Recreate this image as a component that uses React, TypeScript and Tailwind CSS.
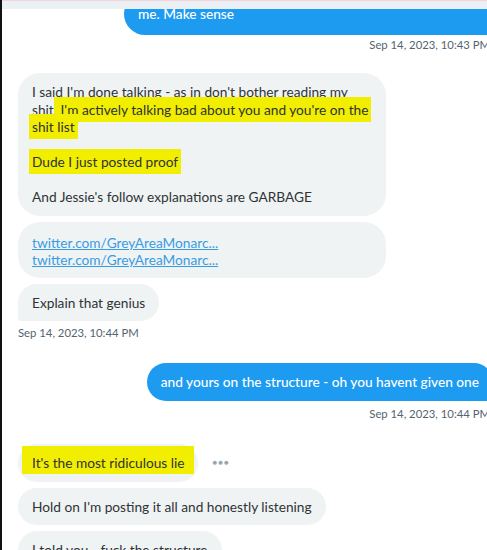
import React from 'react';

const font = { fontFamily: 'Lato, "Noto Sans", Arial, sans-serif' };

function Hl({ children, big }: { children: React.ReactNode; big?: boolean }) {
  return (
    <span
      className={
        big
          ? 'bg-[#f2ee00] pt-[8px] pb-[3px] pl-[10px] pr-[10px] -ml-[10px] -mr-[10px]'
          : 'bg-[#f2ee00] py-[4px] px-[3px] -mx-[3px] [box-decoration-break:clone]'
      }
    >
      {children}
    </span>
  );
}

function Stamp({ right, children }: { right?: boolean; children: React.ReactNode }) {
  return (
    <div className={`text-[11.3px] leading-[16px] text-[#536471] ${right ? 'text-right' : ''}`}>
      {children}
    </div>
  );
}

export default function App() {
  return (
    <div className="w-[487px] h-[550px] overflow-hidden bg-white flex" style={font}>
      <div className="w-[2px] bg-[#111] shrink-0" />
      <div className="flex-1 flex flex-col relative">
        {/* sticky header edge */}
        <div className="relative z-10 h-[9px] shrink-0 bg-[#eaf0f4] border-t border-[#f6d3da]" />

        {/* outgoing bubble, cut at top */}
        <div className="flex justify-end -mr-[12px] -mt-[16px]">
          <div className="w-[375px] bg-[#1d9bf0] text-white text-[13.7px] leading-[18px] font-medium rounded-l-[22px] rounded-tr-[22px] px-[14px] pt-[12px] pb-[12px]">
            me. Make sense
          </div>
        </div>
        <div className="-mr-[3px] mt-[2px]">
          <Stamp right>Sep 14, 2023, 10:43 PM</Stamp>
        </div>

        <div className="pl-[16px] mt-[20px] flex flex-col gap-[6px] text-[13.7px] leading-[17.5px] text-[#2f3336]">
          <div className="w-[368px] bg-[#eff3f4] rounded-[22px] px-[14px] py-[10px]">
            <div className="whitespace-nowrap">
              I said I'm done talking - as in don't bother reading my
              <br />
              shit.<Hl> I'm actively talking bad about you and you're on the</Hl>
              <br />
              <Hl>shit list</Hl>
            </div>
            <div className="h-[17.5px]" />
            <div>
              <Hl>Dude I just posted proof</Hl>
            </div>
            <div className="h-[17.5px]" />
            <div>And Jessie's follow explanations are GARBAGE</div>
          </div>

          <div className="w-[368px] bg-[#eff3f4] rounded-[22px] px-[14px] pt-[12px] pb-[9px] text-[#3a9be3]">
            <div className="underline">twitter.com/GreyAreaMonarc...</div>
            <div className="underline">twitter.com/GreyAreaMonarc...</div>
          </div>

          <div className="self-start bg-[#eff3f4] rounded-[22px] rounded-bl-[4px] px-[14px] py-[10px]">
            Explain that genius
          </div>
        </div>
        <div className="pl-[16px] mt-[4px]">
          <Stamp>Sep 14, 2023, 10:44 PM</Stamp>
        </div>

        <div className="flex justify-end -mr-[6px] mt-[22px]">
          <div className="bg-[#1d9bf0] text-white text-[13.7px] leading-[18px] font-medium rounded-l-[22px] rounded-tr-[22px] rounded-br-[4px] px-[14px] py-[10px]">
            and yours on the structure - oh you havent given one
          </div>
        </div>
        <div className="-mr-[3px] mt-[5px]">
          <Stamp right>Sep 14, 2023, 10:44 PM</Stamp>
        </div>

        <div className="pl-[16px] mt-[22px] flex flex-col gap-[6px] text-[13.7px] leading-[17.5px] text-[#2f3336]">
          <div className="flex items-center gap-[14px]">
            <div className="bg-[#eff3f4] rounded-[22px] px-[14px] py-[10px]">
              <Hl big>It's the most ridiculous lie</Hl>
            </div>
            <span className="text-[#9aa5ae] text-[8px] tracking-[1px]">●●●</span>
          </div>
          <div className="self-start bg-[#eff3f4] rounded-[22px] px-[14px] py-[10px]">
            Hold on I'm posting it all and honestly listening
          </div>
          <div className="self-start bg-[#eff3f4] rounded-[22px] px-[14px] py-[10px]">
            I told you - fuck the structure
          </div>
        </div>
      </div>
    </div>
  );
}
